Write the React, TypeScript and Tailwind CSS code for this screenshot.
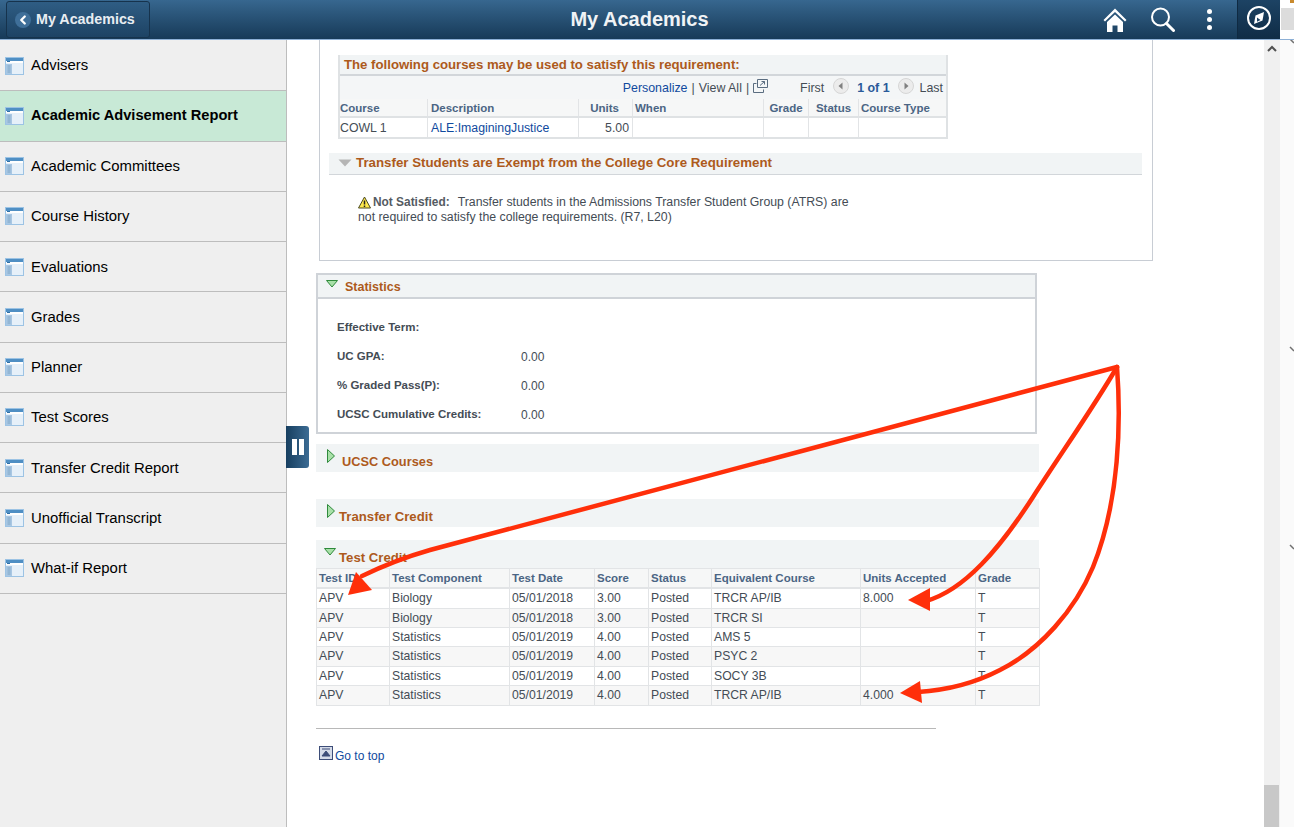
import React from 'react';
import { ChevronLeft } from 'lucide-react';

const navItems = [
  'Advisers',
  'Academic Advisement Report',
  'Academic Committees',
  'Course History',
  'Evaluations',
  'Grades',
  'Planner',
  'Test Scores',
  'Transfer Credit Report',
  'Unofficial Transcript',
  'What-if Report',
];

const testRows = [
  ['APV', 'Biology', '05/01/2018', '3.00', 'Posted', 'TRCR AP/IB', '8.000', 'T'],
  ['APV', 'Biology', '05/01/2018', '3.00', 'Posted', 'TRCR SI', '', 'T'],
  ['APV', 'Statistics', '05/01/2019', '4.00', 'Posted', 'AMS 5', '', 'T'],
  ['APV', 'Statistics', '05/01/2019', '4.00', 'Posted', 'PSYC 2', '', 'T'],
  ['APV', 'Statistics', '05/01/2019', '4.00', 'Posted', 'SOCY 3B', '', 'T'],
  ['APV', 'Statistics', '05/01/2019', '4.00', 'Posted', 'TRCR AP/IB', '4.000', 'T'],
];

const testCols = ['Test ID', 'Test Component', 'Test Date', 'Score', 'Status', 'Equivalent Course', 'Units Accepted', 'Grade'];
const testWidths = [73, 120, 85, 54, 63, 149, 115, 64];

const stats = [
  ['Effective Term:', ''],
  ['UC GPA:', '0.00'],
  ['% Graded Pass(P):', '0.00'],
  ['UCSC Cumulative Credits:', '0.00'],
];

function NavIcon() {
  return (
    <svg width="19" height="18" viewBox="0 0 19 18" className="shrink-0">
      <rect x="0.5" y="0.5" width="18" height="17" fill="#e6f0f9" stroke="#9cc3e4" />
      <rect x="1" y="1" width="17" height="3" fill="#4f8fc4" />
      <rect x="1" y="4" width="17" height="2" fill="#ffffff" />
      <rect x="2" y="4" width="3" height="1" fill="#2f6fa6" />
      <rect x="1" y="7" width="6" height="10" fill="#a9c7e3" />
      <path d="M2.5 9h3M2.5 11h3M2.5 13h3M2.5 15h3" stroke="#7fa6c6" />
    </svg>
  );
}

function Triangle({ dir }: { dir: 'down' | 'right' }) {
  return (
    <svg width="14" height="14" viewBox="0 0 14 14" className="mb-[4px] shrink-0">
      {dir === 'down' ? (
        <path d="M1.5 3.5h11L7 10z" fill="#a8e0a8" stroke="#2f8a3c" />
      ) : (
        <path d="M1.5 0.5v13L8.500 7z" fill="#a8e0a8" stroke="#2f8a3c" />
      )}
    </svg>
  );
}

function CircleArrow({ left }: { left?: boolean }) {
  return (
    <svg width="16" height="16" viewBox="0 0 16 16" className="mb-[5px] shrink-0">
      <circle cx="8" cy="8" r="7.5" fill="#ececec" stroke="#d6d6d6" />
      <path d={left ? 'M9.5 4.5v7L5.5 8z' : 'M6.5 4.5v7L10.5 8z'} fill="#808080" />
    </svg>
  );
}

function Annotations() {
  return (
    <svg width="1294" height="827" viewBox="0 0 1294 827" className="pointer-events-none absolute left-0 top-0">
      <g fill="none" stroke="#ff2f0a" strokeWidth="4.5" strokeLinecap="round">
        <path d="M1117 367 L430 550 Q395 560 362 576" />
        <path d="M1117 367 C1095 405 1060 455 1033 497 C1000 548 965 590 926 601" />
        <path d="M1117 367 C1121 420 1120 500 1093 567 C1075 610 1040 650 1000 670 C975 683 950 690 918 692" />
      </g>
      <g fill="#ff2f0a">
        <path d="M348 595 L356 572 L372 590 Z" />
        <path d="M908 600 L930 588 L930 611 Z" />
        <path d="M900 693 L920 681 L922 703 Z" />
      </g>
    </svg>
  );
}

export default function App() {
  return (
    <div className="relative flex h-[827px] w-[1294px] flex-col overflow-hidden bg-white font-['Liberation_Sans',Arial,sans-serif]">
      <header className="flex h-10 shrink-0 items-center border-b border-[#8db0d6] bg-gradient-to-b from-[#37678f] to-[#173a58]">
        <div className="flex w-[400px] items-center pl-[6px]">
          <div className="flex h-[37px] w-[144px] items-center gap-[5px] rounded-[3px] border border-[#16334d] bg-gradient-to-b from-[#2f5d84] to-[#1d4364] pl-2">
            <span className="flex h-4 w-4 items-center justify-center rounded-full bg-[#3f6f99]">
              <ChevronLeft size={14} strokeWidth={4} className="text-white" />
            </span>
            <span className="text-[14.3px] font-bold text-[#e8edf2]">My Academics</span>
          </div>
        </div>
        <div className="flex-1 pb-[2px] pr-[224px] text-center text-[20px] font-bold text-[#f0f3f6]">My Academics</div>
        <div className="flex h-full items-center">
          <svg width="24" height="24" viewBox="0 0 24 24">
            <path d="M12 0.500L0.500 12l1.500 1.500L12 4l10 9.500 1.500-1.500z" fill="#ffffff" />
            <path d="M4 14L12 6.500 20 14v10h-5.500v-6.500h-5V24H4z" fill="#ffffff" />
          </svg>
          <svg width="24" height="25" viewBox="0 0 24 25" className="ml-[24px]">
            <circle cx="9.500" cy="10" r="8.500" fill="none" stroke="#ffffff" strokeWidth="2" />
            <path d="M15.500 16.500L22.500 23.500" fill="none" stroke="#ffffff" strokeWidth="3" strokeLinecap="round" />
          </svg>
          <div className="ml-[32px] flex flex-col gap-[3px]">
            <span className="h-[5px] w-[5px] rounded-full bg-white" />
            <span className="h-[5px] w-[5px] rounded-full bg-white" />
            <span className="h-[5px] w-[5px] rounded-full bg-white" />
          </div>
          <div className="ml-[25px] flex h-full w-[43px] items-center justify-center border-l border-[#0f2a42] bg-gradient-to-b from-[#1d4364] to-[#0f2c46] pb-[3px]">
            <svg width="26" height="26" viewBox="0 0 26 26">
              <circle cx="13" cy="13" r="11" fill="none" stroke="#ffffff" strokeWidth="2" />
              <path d="M18 7l-1.500 8.500L8 19l1.500-8.500z" fill="#ffffff" />
              <path d="M11 12.500l3.500 2.500-3.500 1.800z" fill="#1d4364" />
            </svg>
          </div>
        </div>
        <div className="relative h-full w-[14px] bg-white">
          <div className="absolute left-px top-[8px] h-[22px] w-[13px] bg-[#dcdcdc]" />
          <div className="absolute right-0 top-0 h-[3px] w-[4px] bg-[#c98a2e]" />
        </div>
      </header>

      <div className="flex min-h-0 flex-1">
        <aside className="w-[287px] shrink-0 border-r border-[#bdbdbd] bg-[#efefef] pt-px">
          {navItems.map((item, i) => (
            <div
              key={item}
              className={`flex h-[50.28px] items-center gap-[7px] border-b border-[#bdbdbd] pl-[5px] text-black ${
                i === 1 ? 'bg-[#c8e9d6] text-[14.65px] font-bold' : 'text-[14.9px]'
              }`}
            >
              <NavIcon />
              <span>{item}</span>
            </div>
          ))}
        </aside>

        <main className="relative min-w-0 flex-1 text-[12px] text-[#444c55]">
          <div className="ml-[32px] h-[221px] w-[834px] border-x border-b border-[#c8cdd4] pl-[18px] pt-[15px]">
            <div className="w-[610px] border-2 border-t-0 border-[#dfe2e4]">
              <div className="flex h-[21px] items-center border-b-2 border-[#d2d6da] bg-[#f1f4f5] pl-[4px] text-[13.2px] font-bold text-[#ad5a1c]">
                The following courses may be used to satisfy this requirement:
              </div>
              <div className="flex h-[23px] items-center justify-end bg-[#f4f6f7] pr-[3px] pt-[2px] text-[12.4px]">
                <span className="text-[#104a9e]">Personalize</span>
                <span className="mx-1 text-[#444c55]">|</span>
                <span className="text-[#444c55]">View All</span>
                <span className="mx-1">|</span>
                <svg width="15" height="14" viewBox="0 0 15 14" className="mb-[5px]">
                  <path d="M0.500 4.500h3M0.500 4.500v9h10v-3M4.500 0.500v8h10v-8z" fill="none" stroke="#5a6d80" />
                  <path d="M7 6.500l4.500-4M8.500 2.500h3v3" fill="none" stroke="#5a6d80" />
                </svg>
                <span className="ml-[32px]">First</span>
                <span className="ml-[9px]"><CircleArrow left /></span>
                <span className="ml-[8px] font-bold text-[#2a5a9a]">1 of 1</span>
                <span className="ml-[8px]"><CircleArrow /></span>
                <span className="ml-[6px]">Last</span>
              </div>
              <div className="flex h-[19px] items-center border-b-2 border-[#dfe2e4] bg-[#f6f7f7] text-[11.5px] font-bold text-[#4b6584]">
                <span className="flex h-full w-[88px] items-center border-r border-[#e2e4e6] pt-[2px]">Course</span>
                <span className="flex h-full w-[151px] items-center border-r border-[#e2e4e6] pl-[3px] pt-[2px]">Description</span>
                <span className="flex h-full w-[54px] items-center justify-end border-r border-[#e2e4e6] pr-[13px] pt-[2px]">Units</span>
                <span className="flex h-full w-[131px] items-center border-r border-[#e2e4e6] pl-[2px] pt-[2px]">When</span>
                <span className="flex h-full w-[45px] items-center justify-center border-r border-[#e2e4e6] pt-[2px]">Grade</span>
                <span className="flex h-full w-[50px] items-center justify-center border-r border-[#e2e4e6] pt-[2px]">Status</span>
                <span className="flex h-full flex-1 items-center pl-[2px] pt-[2px]">Course Type</span>
              </div>
              <div className="flex h-[19px] items-center text-[12.3px]">
                <span className="flex h-full w-[88px] items-center border-r border-[#e2e4e6] pt-px">COWL 1</span>
                <span className="flex h-full w-[151px] items-center border-r border-[#e2e4e6] pl-[3px] pt-px text-[#104a9e]">ALE:ImaginingJustice</span>
                <span className="flex h-full w-[54px] items-center justify-end border-r border-[#e2e4e6] pr-[3px] pt-px">5.00</span>
                <span className="h-full w-[131px] border-r border-[#e2e4e6]" />
                <span className="h-full w-[45px] border-r border-[#e2e4e6]" />
                <span className="h-full w-[50px] border-r border-[#e2e4e6]" />
              </div>
            </div>
            <div className="-ml-[9px] mt-[14px] flex h-[22px] w-[813px] items-center gap-[4px] border-b border-[#d2d6da] bg-[#f1f4f5] pb-[2px] pl-[9px] text-[13.3px] font-bold text-[#ad5a1c]">
              <svg width="14" height="10" viewBox="0 0 14 10"><path d="M0.500 1.500h13L7 8.500z" fill="#b5b5b5" /></svg>
              Transfer Students are Exempt from the College Core Requirement
            </div>
            <div className="ml-[20px] mt-[20px] w-[520px] text-[12.3px] leading-[15px]">
              <div className="flex items-center">
                <svg width="13" height="13" viewBox="0 0 13 13" className="shrink-0">
                  <path d="M6.500 1L12.500 12H0.500z" fill="#ffe94d" stroke="#4a4a20" />
                  <path d="M6.500 4.500v4M6.500 9.500v1.500" stroke="#222222" strokeWidth="1.500" />
                </svg>
                <b className="ml-[2px] text-[11.9px] text-[#555b62]">Not Satisfied:</b>
                <span className="ml-[8px]">Transfer students in the Admissions Transfer Student Group (ATRS) are</span>
              </div>
              <div>not required to satisfy the college requirements. (R7, L20)</div>
            </div>
          </div>

          <section className="ml-[29px] mt-[12px] h-[161px] w-[721px] border-2 border-[#cfd3d8]">
            <div className="flex h-[24px] items-center gap-[6px] border-b-2 border-[#cfd3d8] bg-[#f1f4f5] pl-[7px] text-[12.5px] font-bold text-[#ad5a1c]">
              <Triangle dir="down" />
              <span className="pt-[2px]">Statistics</span>
            </div>
            <div className="pl-[19px] pt-[14px] text-[11.5px] font-bold">
              {stats.map(([label, value]) => (
                <div key={label} className="flex h-[29px] items-center">
                  <span className="w-[184px]">{label}</span>
                  <span className="text-[12px] font-normal">{value}</span>
                </div>
              ))}
            </div>
          </section>

          <div className="ml-[29px] mt-[10px] flex h-[28px] w-[723px] items-center gap-[2px] bg-[#f1f4f5] pl-[10px] text-[12.8px] font-bold text-[#ad5a1c]">
            <Triangle dir="right" />
            <span className="pt-[8px]">UCSC Courses</span>
          </div>
          <div className="ml-[29px] mt-[27px] flex h-[28px] w-[723px] items-center bg-[#f1f4f5] pl-[10px] text-[13.2px] font-bold text-[#ad5a1c]">
            <Triangle dir="right" />
            <span className="-ml-px pt-[8px]">Transfer Credit</span>
          </div>
          <div className="ml-[29px] mt-[13px] flex h-[28px] w-[723px] items-center gap-[2px] bg-[#f1f4f5] pl-[7px] text-[13.2px] font-bold text-[#ad5a1c]">
            <Triangle dir="down" />
            <span className="pt-[8px]">Test Credit</span>
          </div>

          <table className="ml-[29px] w-[723px] table-fixed border-collapse border border-[#e2e4e6]">
            <colgroup>
              {testWidths.map((w, i) => (
                <col key={i} style={{ width: w }} />
              ))}
            </colgroup>
            <thead>
              <tr className="h-[19px] border-b-2 border-[#e2e4e6] bg-[#f6f7f7]">
                {testCols.map((c) => (
                  <th key={c} className="border-r border-[#e2e4e6] pl-[2px] pt-px text-left text-[11.5px] font-bold text-[#4b6584]">{c}</th>
                ))}
              </tr>
            </thead>
            <tbody>
              {testRows.map((row, i) => (
                <tr key={i} className={`h-[19.4px] border-b border-[#e2e4e6] ${i % 2 === 1 ? 'bg-[#f7f7f7]' : 'bg-white'}`}>
                  {row.map((cell, j) => (
                    <td key={j} className="border-r border-[#e2e4e6] pl-[2px] text-[12.2px]">{cell}</td>
                  ))}
                </tr>
              ))}
            </tbody>
          </table>

          <div className="ml-[29px] mt-[22px] h-px w-[620px] bg-[#b8b8b8]" />
          <div className="ml-[32px] mt-[17px] flex items-start text-[#104a9e]">
            <svg width="14" height="14" viewBox="0 0 14 14" className="shrink-0">
              <rect x="0.500" y="0.500" width="13" height="13" fill="#d5dbe8" stroke="#3d4d78" />
              <path d="M3 3h8M7 5L3 10h8z" stroke="#3d4d78" fill="#3d4d78" />
            </svg>
            <span className="ml-[2px] mt-[3px] leading-[14px]">Go to top</span>
          </div>

          <button className="absolute left-[-1px] top-[386px] flex h-[42px] w-[23px] items-center justify-center gap-[2px] rounded-r-[3px] bg-gradient-to-r from-[#173f60] to-[#3c6c94]">
            <span className="h-[16px] w-[5px] bg-white" />
            <span className="h-[16px] w-[5px] bg-white" />
          </button>
        </main>

        <div className="relative w-4 shrink-0 bg-[#f0f0f0]">
          <svg width="12" height="8" viewBox="0 0 12 8" className="absolute left-[2px] top-[5px]">
            <path d="M2 6l4-4 4 4" fill="none" stroke="#505050" strokeWidth="2" />
          </svg>
          <div className="absolute bottom-0 left-0 h-[42px] w-[15px] bg-[#c8c8c8]" />
        </div>
        <div className="relative w-[14px] shrink-0 bg-[#fafafa]">
          <svg width="14" height="600" viewBox="0 0 14 600" className="absolute left-0 top-0">
            <g fill="none" stroke="#707070" strokeWidth="1.500">
              <path d="M10 -1l4 4M10 307l4 4M10 505l4 4" />
            </g>
          </svg>
        </div>
      </div>

      <Annotations />
    </div>
  );
}
